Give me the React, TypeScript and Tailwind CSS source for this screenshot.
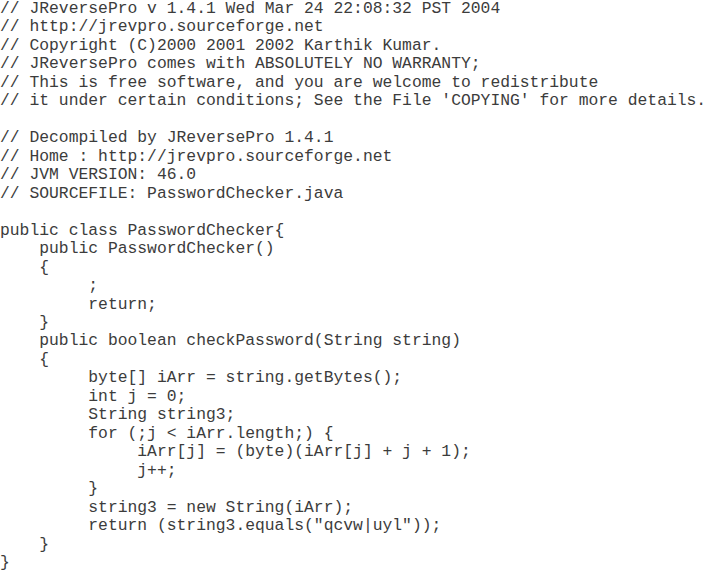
const lines: string[] = [
  "// JReversePro v 1.4.1 Wed Mar 24 22:08:32 PST 2004",
  "// http://jrevpro.sourceforge.net",
  "// Copyright (C)2000 2001 2002 Karthik Kumar.",
  "// JReversePro comes with ABSOLUTELY NO WARRANTY;",
  "// This is free software, and you are welcome to redistribute",
  "// it under certain conditions; See the File 'COPYING' for more details.",
  "",
  "// Decompiled by JReversePro 1.4.1",
  "// Home : http://jrevpro.sourceforge.net",
  "// JVM VERSION: 46.0",
  "// SOURCEFILE: PasswordChecker.java",
  "",
  "public class PasswordChecker{",
  "    public PasswordChecker()",
  "    {",
  "         ;",
  "         return;",
  "    }",
  "    public boolean checkPassword(String string)",
  "    {",
  "         byte[] iArr = string.getBytes();",
  "         int j = 0;",
  "         String string3;",
  "         for (;j < iArr.length;) {",
  "              iArr[j] = (byte)(iArr[j] + j + 1);",
  "              j++;",
  "         }",
  "         string3 = new String(iArr);",
  "         return (string3.equals(\"qcvw|uyl\"));",
  "    }",
  "}",
];

export default function App() {
  return (
    <div className="min-h-screen w-full bg-white overflow-hidden">
      <pre className="m-0 pt-0 font-['Liberation_Mono','Courier_New',monospace] text-[16.35px] leading-[18.47px] text-[#3c3c3c] whitespace-pre">
        {lines.map((line, i) => (
          <div key={i} className="h-[18.47px]">
            {line}
          </div>
        ))}
      </pre>
    </div>
  );
}
